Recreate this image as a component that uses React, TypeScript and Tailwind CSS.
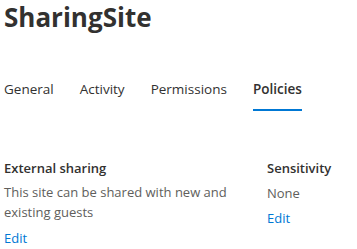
const tabs = ["General", "Activity", "Permissions", "Policies"];

export default function App() {
  return (
    <div className="h-[249px] w-[357px] overflow-hidden bg-white pl-1 font-['Open_Sans',sans-serif] text-[#323130]">
      <h1 className="pt-[1px] text-[26px] font-bold leading-[32px]">SharingSite</h1>
      <div className="mt-[46px] flex">
        {tabs.map((t, i) => (
          <div
            key={t}
            className={
              "mr-[26px] flex flex-col " +
              (i === 3 ? "font-semibold text-[#323130]" : "text-[#323130]")
            }
          >
            <span className="text-[13.5px] leading-[20px]">{t}</span>
            <div className={"mt-[10px] h-[2px] " + (i === 3 ? "bg-[#0078d4]" : "bg-transparent")} />
          </div>
        ))}
      </div>
      <div className="mt-[47px] flex">
        <div className="w-[263px]">
          <div className="text-[13px] font-semibold leading-[20px]">External sharing</div>
          <p className="mt-[4px] w-[240px] text-[13px] leading-[20px] text-[#605e5c]">
            This site can be shared with new and existing guests
          </p>
          <a className="mt-[6px] block text-[13px] leading-[20px] text-[#0078d4]">Edit</a>
        </div>
        <div>
          <div className="text-[13px] font-semibold leading-[20px]">Sensitivity</div>
          <div className="mt-[5px] text-[13px] leading-[20px] text-[#605e5c]">None</div>
          <a className="mt-[5px] block text-[13px] leading-[20px] text-[#0078d4]">Edit</a>
        </div>
      </div>
    </div>
  );
}
